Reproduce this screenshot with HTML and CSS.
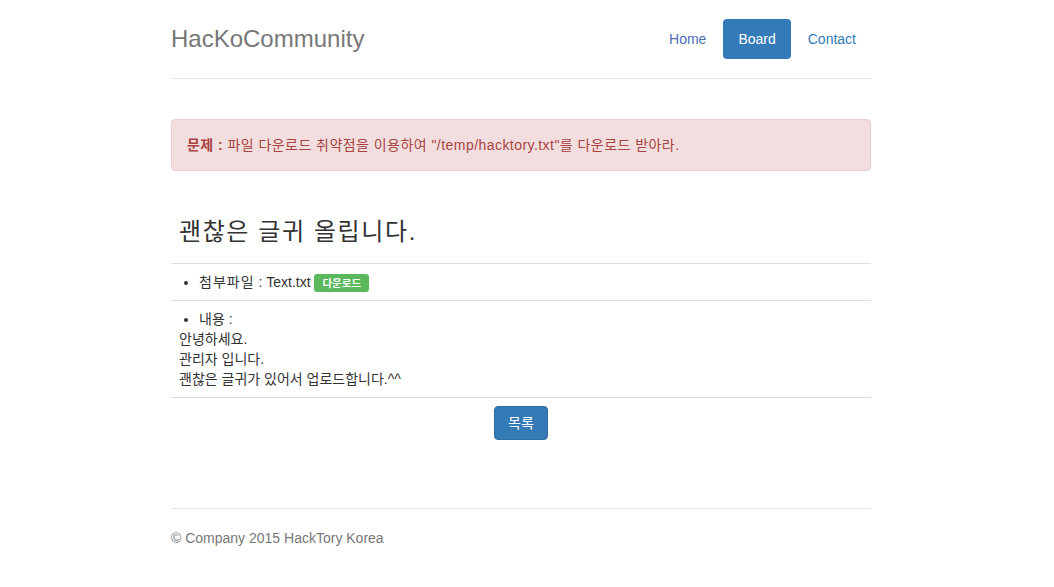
FILE: index.html
```html
<!DOCTYPE html>
<html lang="ko">
<head>
<meta charset="utf-8">
<title>HacKoCommunity</title>
<link rel="stylesheet" href="styles.css">
</head>
<body>
<div class="container">
  <div class="header">
    <h3 class="brand">HacKoCommunity</h3>
    <ul class="nav">
      <li><a href="#">Home</a></li>
      <li class="active"><a href="#">Board</a></li>
      <li><a href="#">Contact</a></li>
    </ul>
  </div>

  <div class="alert"><strong>문제 :</strong> 파일 다운로드 취약점을 이용하여 "/temp/hacktory.txt"를 다운로드 받아라.</div>

  <table class="board">
    <tr><td class="title-cell"><h3 class="title">괜찮은 글귀 올립니다.</h3></td></tr>
    <tr><td><ul class="items"><li><span class="wide">첨부파일</span> : Text.txt <span class="label">다운로드</span></li></ul></td></tr>
    <tr><td><ul class="items"><li>내용 :</li></ul>안녕하세요.<br>관리자 입니다.<br>괜찮은 글귀가 있어서 업로드합니다.^^</td></tr>
    <tr><td class="center"><button class="btn">목록</button></td></tr>
  </table>

  <footer class="footer">© Company 2015 HackTory Korea</footer>
</div>
</body>
</html>
```

FILE: styles.css
```css
html, body {
  margin: 0;
  padding: 0;
  background: #fff;
}
body {
  padding-right: 12px;
  font-family: "Liberation Sans", Arial, "Noto Sans CJK KR", sans-serif;
  font-size: 14px;
  line-height: 20px;
  color: #333;
}
.container {
  max-width: 700px;
  margin: 0 auto;
}
.header {
  display: flex;
  justify-content: space-between;
  align-items: center;
  padding: 19px 0 19px;
  border-bottom: 1px solid #e5e5e5;
}
.brand {
  margin: 0;
  font-size: 24px;
  font-weight: normal;
  line-height: 40px;
  color: #777;
}
.nav {
  display: flex;
  gap: 2px;
  list-style: none;
  margin: 0;
  padding: 0;
}
.nav a {
  display: block;
  padding: 10px 15px;
  color: #337ab7;
  text-decoration: none;
  border-radius: 4px;
}
.nav li:first-child a {
  color: #4d6fb0;
}
.nav .active a {
  background: #337ab7;
  color: #fff;
}
.alert {
  margin: 40px 0 20px;
  padding: 15px;
  background: #f2dede;
  border: 1px solid #ebccd1;
  border-radius: 4px;
  color: #a94442;
  letter-spacing: 0.45px;
}
.board {
  width: 100%;
  border-collapse: collapse;
  margin-bottom: 20px;
}
.board td {
  padding: 8px;
  border-top: 1px solid #ddd;
  vertical-align: top;
}
.board td.title-cell {
  border-top: none;
}
.title {
  margin: 20px 0 10px;
  font-size: 24px;
  font-weight: normal;
  line-height: 26px;
  color: #333;
  letter-spacing: 1.6px;
}
.items {
  margin: 0;
  padding-left: 20px;
}
.wide {
  letter-spacing: 1px;
}
.label {
  display: inline-block;
  vertical-align: top;
  margin-top: 2px;
  height: 18px;
  padding: 0 8px;
  font-size: 10.5px;
  font-weight: bold;
  line-height: 18px;
  color: #fff;
  background: #5cb85c;
  border-radius: 3px;
}
.center {
  text-align: center;
}
.btn {
  display: inline-block;
  padding: 6px 13px;
  font-family: inherit;
  font-size: 14px;
  line-height: 20px;
  color: #fff;
  background: #337ab7;
  border: 1px solid #2e6da4;
  border-radius: 4px;
  cursor: pointer;
}
.footer {
  margin-top: 60px;
  padding-top: 19px;
  border-top: 1px solid #e5e5e5;
  color: #777;
}
```
